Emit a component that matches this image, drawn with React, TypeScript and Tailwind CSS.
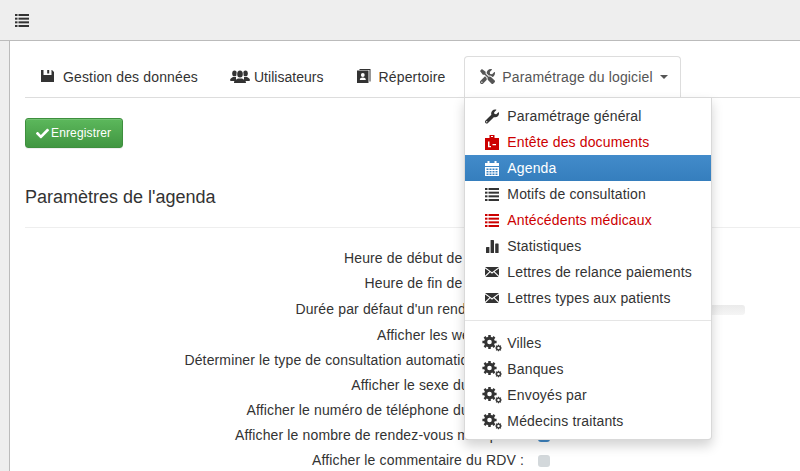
import { FaCheck, FaTools, FaWrench } from "react-icons/fa";
import type { ReactNode } from "react";

function ListIcon({ className }: { className?: string }) {
  return (
    <svg viewBox="0 0 14 13" width="14" height="13" className={className} fill="currentColor">
      {[0, 3.67, 7.33, 11].map((y) => (
        <g key={y}>
          <rect x="0" y={y} width="2.5" height="2" />
          <rect x="3.5" y={y} width="10.5" height="2" />
        </g>
      ))}
    </svg>
  );
}

function SaveIcon({ className }: { className?: string }) {
  return (
    <svg viewBox="0 0 13 12" width="13" height="12" className={className} fill="currentColor">
      <path fillRule="evenodd" d="M0 0h11l2 2v10H0zM2.5 0v5h8V0H8.2v3.4H6.2V0z" />
    </svg>
  );
}

function UsersIcon({ className }: { className?: string }) {
  return (
    <svg viewBox="0 0 20 13" width="20" height="13" className={className} fill="currentColor">
      <ellipse cx="4.5" cy="3.4" rx="2.3" ry="2.9" />
      <ellipse cx="15.5" cy="3.4" rx="2.3" ry="2.9" />
      <path d="M0 10.5c0-2.4 2-2.5 3-3.4h3v4H1z" />
      <path d="M20 10.5c0-2.4-2-2.5-3-3.4h-3v4h5z" />
      <ellipse cx="10" cy="4" rx="3" ry="3.8" fill="#fff" stroke="#fff" strokeWidth="1" />
      <ellipse cx="10" cy="4" rx="2.8" ry="3.6" />
      <path d="M4 13c0-3.3 2.6-3.7 4-4.6h4c1.4.9 4 1.3 4 4.6z" />
    </svg>
  );
}

function BookIcon({ className }: { className?: string }) {
  return (
    <svg viewBox="0 0 14 14" width="14" height="14" className={className} fill="currentColor">
      <path d="M0 1.5h11.5V14H0z" />
      <path d="M2.5 0h11v12.5h-1V1h-10z" />
      <circle cx="5.8" cy="6" r="1.9" fill="#fff" />
      <path d="M2.8 11c0-2 1.3-2.6 3-2.6s3 .6 3 2.6z" fill="#fff" />
    </svg>
  );
}

function HeaderDocIcon() {
  return (
    <svg viewBox="0 0 14 15" width="14" height="15" fill="currentColor">
      <path d="M0 3h14v12H0zM4.5 0h5v3h-5z" />
      <path d="M6 1h2v1H6z" fill="#fff" />
      <path d="M3 6.5h1.5V11H6v1.2H3zM7.5 9H11v1.3H7.5z" fill="#fff" />
    </svg>
  );
}

function CalendarIcon() {
  return (
    <svg viewBox="0 0 14 15" width="14" height="15" fill="currentColor">
      <path d="M0 2h2.5V0h2v2h5V0h2v2H14v3H0z" />
      <path fillRule="evenodd" d="M0 6h14v9H0zM1.5 7.5v1.5h2V7.5zm3 0v1.5h2V7.5zm3 0v1.5h2V7.5zm3 0v1.5h2V7.5zM1.5 10v1.5h2V10zm3 0v1.5h2V10zm3 0v1.5h2V10zm3 0v1.5h2V10zM1.5 12.5V14h2v-1.5zm3 0V14h2v-1.5zm3 0V14h2v-1.5zm3 0V14h2v-1.5z" />
    </svg>
  );
}

function BarsIcon() {
  return (
    <svg viewBox="0 0 14 13" width="14" height="13" fill="currentColor">
      <rect x="1" y="7" width="3.4" height="6" rx="0.6" />
      <rect x="5.6" y="0" width="3.4" height="13" rx="0.6" />
      <rect x="10.2" y="3.5" width="3.4" height="9.5" rx="0.6" />
    </svg>
  );
}

function MailIcon() {
  return (
    <svg viewBox="0 0 14 10" width="14" height="10" fill="currentColor">
      <path d="M0 0h14L7 5.2z" />
      <path d="M0 1.4v7.4l4.4-4.2zM14 1.4v7.4L9.6 4.6zM5.2 5.3 7 6.7l1.8-1.4L13.6 10H.4z" />
    </svg>
  );
}

// solid toothed wheel with a hole, used by the two wheels of the gears icon
function gearPath(cx: number, cy: number, outer: number, inner: number, hole: number, teeth: number) {
  const pts: string[] = [];
  const step = (Math.PI * 2) / teeth;
  for (let i = 0; i < teeth; i++) {
    const a = i * step;
    const w = step * 0.22;
    const p = (r: number, t: number) => `${(cx + r * Math.cos(t)).toFixed(2)} ${(cy + r * Math.sin(t)).toFixed(2)}`;
    pts.push(p(inner, a - w * 1.4), p(outer, a - w), p(outer, a + w), p(inner, a + w * 1.4));
  }
  const ring = `M${cx - hole} ${cy}a${hole} ${hole} 0 1 0 ${hole * 2} 0a${hole} ${hole} 0 1 0 ${-hole * 2} 0z`;
  return `M${pts.join("L")}z${ring}`;
}

function GearsIcon() {
  return (
    <svg viewBox="0 0 20 17" width="20" height="17" fill="currentColor">
      <path fillRule="evenodd" d={gearPath(7.5, 7, 7.2, 5.4, 2.3, 8)} />
      <path fillRule="evenodd" d={gearPath(16.5, 13, 3.4, 2.6, 1.2, 8)} />
    </svg>
  );
}

const menuTop: { icon: ReactNode; label: string; red?: boolean; active?: boolean }[] = [
  { icon: <FaWrench size={15} />, label: "Paramétrage général" },
  { icon: <HeaderDocIcon />, label: "Entête des documents", red: true },
  { icon: <CalendarIcon />, label: "Agenda", active: true },
  { icon: <ListIcon />, label: "Motifs de consultation" },
  { icon: <ListIcon />, label: "Antécédents médicaux", red: true },
  { icon: <BarsIcon />, label: "Statistiques" },
  { icon: <MailIcon />, label: "Lettres de relance paiements" },
  { icon: <MailIcon />, label: "Lettres types aux patients" },
];

const menuBottom = ["Villes", "Banques", "Envoyés par", "Médecins traitants"];

const rows: { label: string; h: string; control?: "slider" | "on" | "off" }[] = [
  { label: "Heure de début de l'agenda:", h: "h-[25px]" },
  { label: "Heure de fin de l'agenda:", h: "h-[25px]" },
  { label: "Durée par défaut d'un rendez-vous :", h: "h-[26px]", control: "slider" },
  { label: "Afficher les weekends :", h: "h-[26px]", control: "on" },
  { label: "Déterminer le type de consultation automatiquement :", h: "h-[25px]", control: "on" },
  { label: "Afficher le sexe du patient :", h: "h-[25px]", control: "on" },
  { label: "Afficher le numéro de téléphone du patient :", h: "h-[25px]", control: "on" },
  { label: "Afficher le nombre de rendez-vous manqués :", h: "h-[25px]", control: "on" },
  { label: "Afficher le commentaire du RDV :", h: "h-[25px]", control: "off" },
];

function Tab({ icon, label, tight }: { icon: ReactNode; label: string; tight?: boolean }) {
  return (
    <a className="mr-[2px] flex h-[41px] items-center px-[15px] text-[#333]">
      {icon}
      <span className={tight ? "pt-[2px] tracking-[0.03px]" : "pt-[2px]"}>{label}</span>
    </a>
  );
}

export default function App() {
  return (
    <div className="h-[471px] w-[800px] overflow-hidden bg-white font-['Liberation_Sans',Arial,sans-serif] text-[14px] tracking-[0.14px] text-[#333]">
      <header className="flex h-[41px] items-center border-b border-[#bbb] bg-[#eee] pl-[15px]">
        <ListIcon />
      </header>
      <div className="flex h-[430px]">
        <aside className="w-[10px] shrink-0 border-r border-[#bbb] bg-[#eee]" />
        <main className="flex-1 pl-[15px] pt-[15px]">
          <nav className="flex h-[42px] border-b border-[#ddd]">
            <Tab icon={<SaveIcon className="ml-[1px] mr-[9px] -mt-[2px]" />} label="Gestion des données" />
            <Tab icon={<UsersIcon className="mr-[4px] -mt-[1px]" />} label="Utilisateurs" tight />
            <Tab icon={<BookIcon className="ml-[1px] mr-[8px] -mt-[1px]" />} label="Répertoire" />
            <div className="relative ml-[2px] h-[42px]">
              <a className="flex h-[42px] w-[217px] items-center rounded-t border border-[#ddd] border-b-white bg-white pl-[15px] text-[#555]">
                <FaTools size={15} className="mr-[7px] -mt-[1px]" />
                <span className="pt-[1px]">Paramétrage du logiciel</span>
                <span className="ml-[7px] h-0 w-0 border-x-4 border-t-4 border-x-transparent border-t-[#555]" />
              </a>
              <ul className="absolute left-0 top-[41px] z-10 w-[248px] rounded-b border border-black/15 bg-white py-[5px] shadow-[0_6px_12px_rgba(0,0,0,0.175)]">
                {menuTop.map((item) => (
                  <li
                    key={item.label}
                    className={`flex h-[26px] items-center pl-[20px] ${
                      item.active
                        ? "bg-gradient-to-b from-[#428bca] to-[#357ebd] text-white"
                        : item.red
                          ? "text-[#cc0000]"
                          : "text-[#333]"
                    }`}
                  >
                    <span className="mr-[8px] flex w-[14px] justify-center">{item.icon}</span>
                    <span>{item.label}</span>
                  </li>
                ))}
                <li className="my-[9px] h-px bg-[#e5e5e5]" />
                {menuBottom.map((label) => (
                  <li key={label} className="flex h-[26px] items-center pl-[17px]">
                    <span className="mr-[5px] flex w-[20px] justify-center">
                      <GearsIcon />
                    </span>
                    <span>{label}</span>
                  </li>
                ))}
              </ul>
            </div>
          </nav>
          <button
            type="button"
            className="mt-[20px] flex h-[30px] w-[98px] items-center rounded-[3px] border border-[#3e8f3e] bg-gradient-to-b from-[#5cb85c] to-[#419641] pl-[10px] text-[12px] text-white shadow-[inset_0_1px_0_rgba(255,255,255,0.15),0_1px_1px_rgba(0,0,0,0.075)]"
          >
            <FaCheck size={13} className="mr-[2px]" />
            Enregistrer
          </button>
          <h3 className="mt-[39px] text-[18px] leading-[20px] tracking-normal">Paramètres de l'agenda</h3>
          <hr className="mt-[20px] border-[#eee]" />
          <form className="mt-[18px]">
            {rows.map((row) => (
              <div key={row.label} className={`flex items-center ${row.h}`}>
                <label className="w-[499px] shrink-0 text-right">{row.label}</label>
                {row.control === "slider" && (
                  <div className="ml-[14px] mt-[1px] h-[10px] w-[207px] rounded-[3px] bg-gradient-to-b from-[#ebebeb] to-[#f5f5f5]" />
                )}
                {row.control === "on" && (
                  <span className="ml-[14px] h-[12px] w-[12px] rounded-[3px] bg-[#428bca]" />
                )}
                {row.control === "off" && (
                  <span className="ml-[14px] h-[12px] w-[12px] rounded-[3px] bg-[#d3d8db]" />
                )}
              </div>
            ))}
          </form>
        </main>
      </div>
    </div>
  );
}
